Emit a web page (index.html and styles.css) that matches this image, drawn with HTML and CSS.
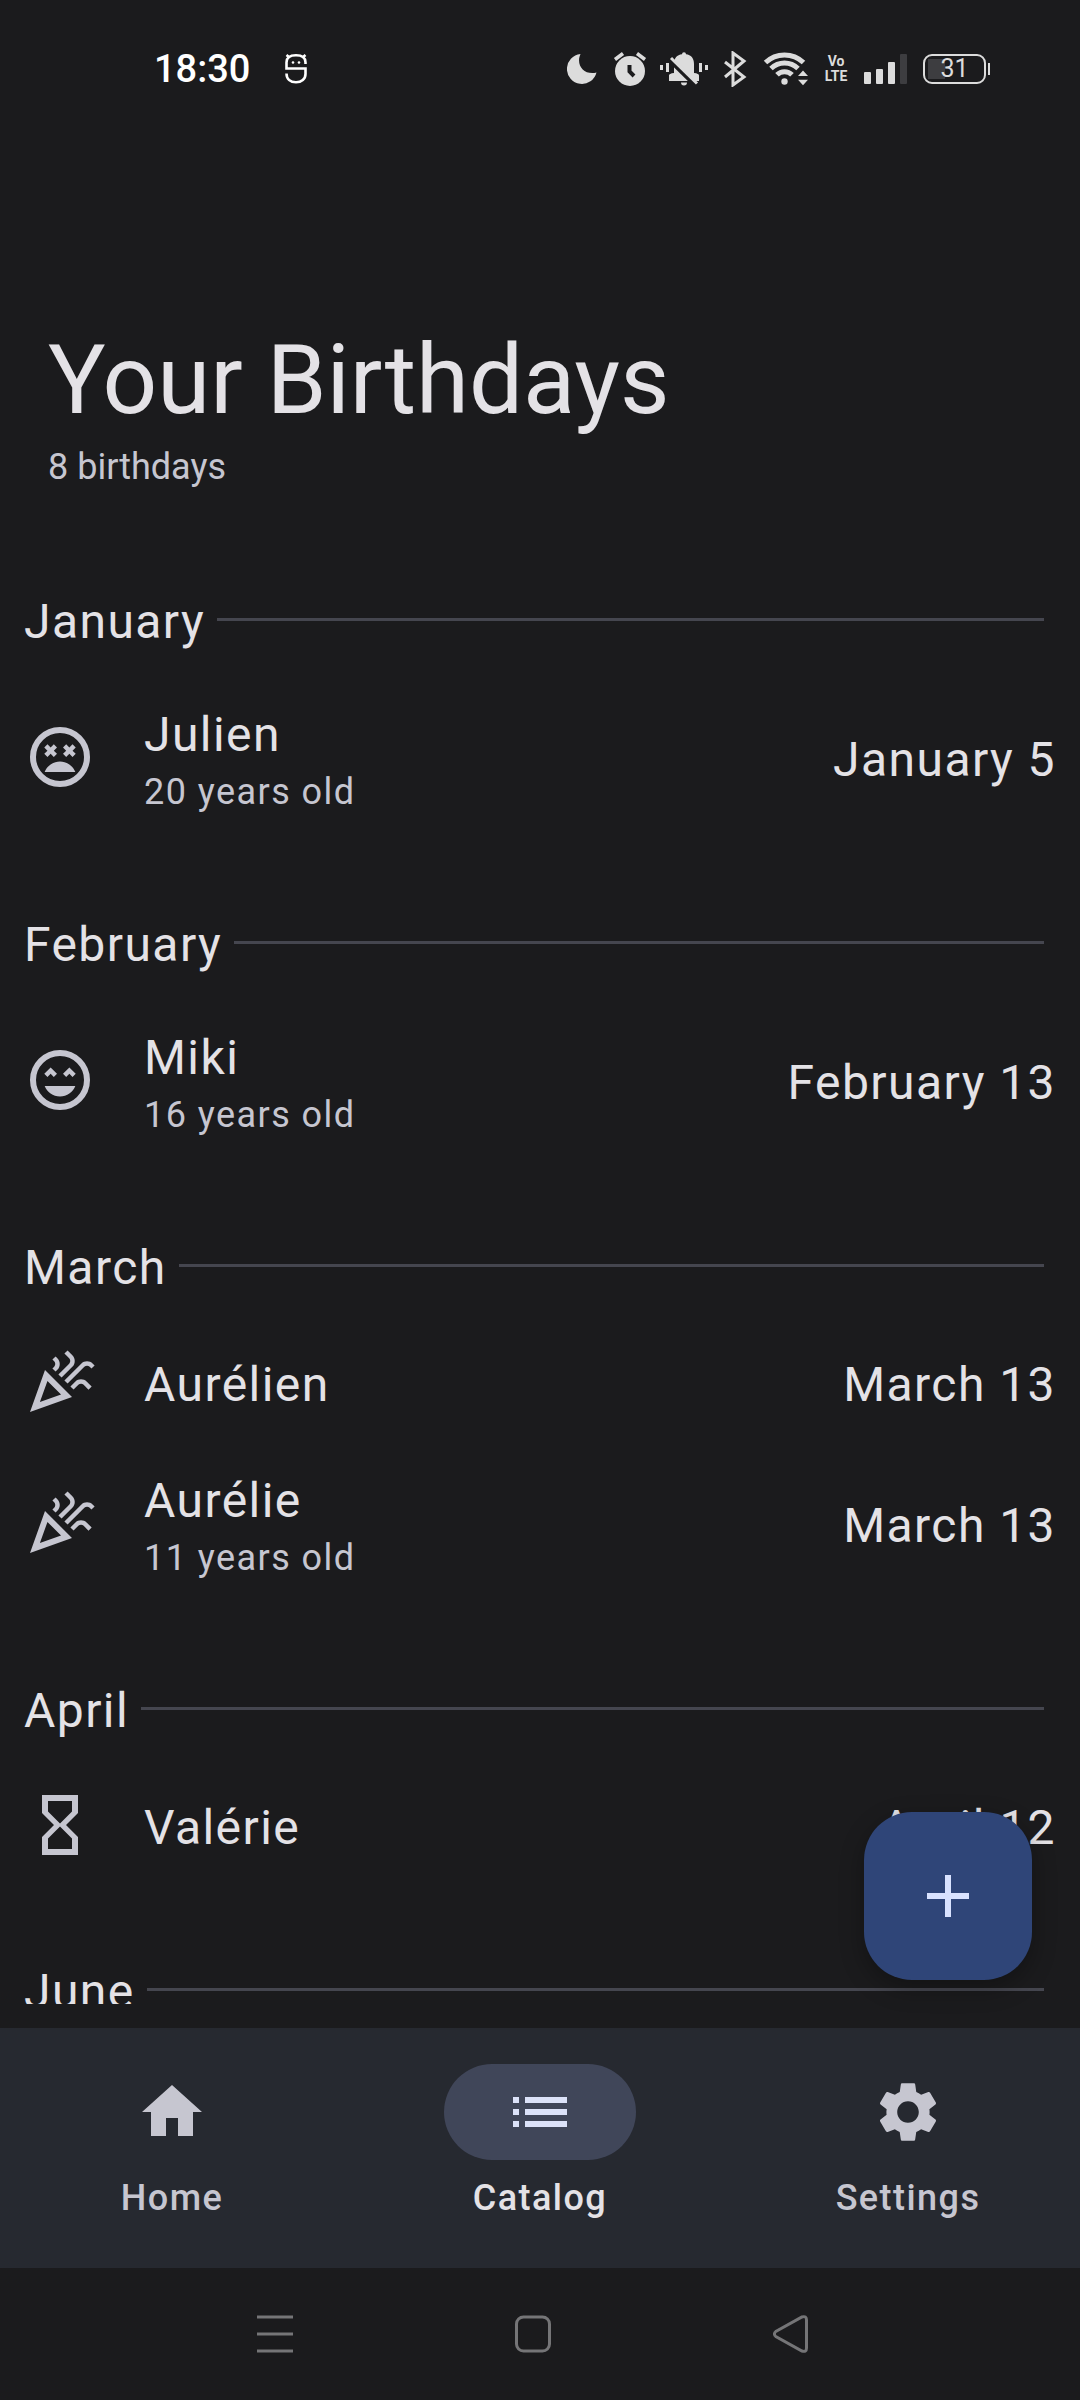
FILE: index.html
```html
<!DOCTYPE html>
<html lang="en">
<head>
<meta charset="utf-8">
<meta name="viewport" content="width=device-width, initial-scale=1">
<title>Your Birthdays</title>
<link rel="stylesheet" href="styles.css">
</head>
<body>
<svg class="sprite" aria-hidden="true">
  <symbol id="icon-dead" viewBox="0 0 24 24">
    <circle cx="12" cy="12" r="9" fill="none" stroke="currentColor" stroke-width="2"/>
    <path d="M12 13.5c-2.33 0-4.31 1.46-5.11 3.5h10.22c-.8-2.04-2.78-3.5-5.11-3.5zM7.82 12l1.06-1.06L9.94 12 11 10.94 9.94 9.88 11 8.82 9.94 7.76 8.88 8.82 7.82 7.76 6.76 8.82l1.06 1.06-1.06 1.06zM17.24 10.94l-1.06-1.06 1.06-1.06-1.06-1.06-1.06 1.06-1.06-1.06L13 8.82l1.06 1.06L13 10.94 14.06 12l1.06-1.06L16.18 12z"/>
  </symbol>
  <symbol id="icon-happy" viewBox="0 0 24 24">
    <circle cx="12" cy="12" r="9" fill="none" stroke="currentColor" stroke-width="2"/>
    <path d="M12 17.5c2.33 0 4.31-1.46 5.11-3.5H6.89c.8 2.04 2.78 3.5 5.11 3.5zM13 9.94L14.06 11l1.06-1.06L16.18 11l1.06-1.06-2.12-2.12zM8.88 9.94L9.94 11 11 9.94 8.88 7.82 6.76 9.94 7.82 11z"/>
  </symbol>
  <symbol id="icon-party" viewBox="0 0 24 24">
    <path d="M2 22l14-5-9-9L2 22zm10.35-5.82L5.3 18.7l2.52-7.05 4.53 4.53zM14.53 12.53l5.59-5.59c.49-.49 1.28-.49 1.77 0l.59.59 1.06-1.06-.59-.59c-1.07-1.07-2.82-1.07-3.89 0l-5.59 5.59 1.06 1.06zM10.06 6.88l-.59.59 1.06 1.06.59-.59c1.07-1.07 1.07-2.82 0-3.89l-.59-.59-1.06 1.07.59.59c.48.48.48 1.28 0 1.76zM17.06 11.88l-1.59 1.59 1.06 1.06 1.59-1.59c.49-.49 1.28-.49 1.77 0l1.61 1.61 1.06-1.06-1.61-1.61c-1.08-1.07-2.82-1.07-3.89 0zM15.06 5.88l-3.59 3.59 1.06 1.06 3.59-3.59c1.07-1.07 1.07-2.82 0-3.89l-1.59-1.59-1.06 1.06 1.59 1.59c.48.49.48 1.29 0 1.77z"/>
  </symbol>
  <symbol id="icon-hourglass" viewBox="0 0 24 24">
    <path d="M6 2v6h.01L6 8.01 10 12l-4 4 .01.01H6V22h12v-5.99h-.01L18 16l-4-4 4-3.99-.01-.01H18V2H6zm10 14.5V20H8v-3.5l4-4 4 4zm-4-5l-4-4V4h8v3.5l-4 4z"/>
  </symbol>
</svg>

<div class="app">
  <header class="status-bar">
    <time class="clock">18:30</time>
    <svg class="status-icon app-badge" width="24" height="36" viewBox="283 51 24 36">
      <g fill="none" stroke="currentColor" stroke-width="2.6">
        <path d="M304.500 64v-1.500c0-4.500-3.500-7.200-9.500-7.200s-9.500 2.700-9.500 7.200v6h19v5.500c0 5-4 8.200-9.500 8.200s-9.500-3.200-9.500-8.700"/>
        <path d="M285.500 55l3 2.500M304.500 55l-3 2.500"/>
      </g>
      <circle cx="292" cy="62.500" r="1.300"/><circle cx="298" cy="62.500" r="1.300"/>
    </svg>
    <div class="status-tray">
      <svg class="status-icon" width="33" height="36" viewBox="567 51 33 36">
        <path d="M580.500 54A15 15 0 1 0 596.500 72.500C584 75.500 575.500 65 580.500 54z"/>
      </svg>
      <svg class="status-icon" width="36" height="36" viewBox="612 51 36 36">
        <circle cx="630" cy="71" r="15"/>
        <path d="M615 59.500l8-6M645 59.500l-8-6" stroke="currentColor" stroke-width="3.500"/>
        <path class="cutout" d="M629.500 65v6.500l4.500 4.500" stroke-width="4"/>
      </svg>
      <svg class="status-icon" width="48" height="36" viewBox="660 51 48 36">
        <path d="M669 81v-5.500q0-2 5-2.500v-9c0-6 3-9 8-9.700a2 2 0 0 1 4 0c5 .7 8 3.700 8 9.700v9q5 .5 5 2.500V81zM681 82.500h6a3 3 0 0 1-6 0zM660 65h3v5h-3zM666 63h3v9h-3zM699 63h3v9h-3zM705 65h3v5h-3z"/>
        <path class="cutout" d="M669 59l28.500 28" stroke-width="5"/>
        <path d="M671 58l26 25.500" stroke="currentColor" stroke-width="3"/>
      </svg>
      <svg class="status-icon" width="28" height="36" viewBox="720 51 28 36">
        <path d="M725 62l19 15-11 8V53l11 8-19 16" fill="none" stroke="currentColor" stroke-width="3"/>
      </svg>
      <svg class="status-icon" width="52" height="36" viewBox="760 51 52 36">
        <g fill="none" stroke="currentColor" stroke-width="5">
          <path d="M765.500 62.500a27.500 27.500 0 0 1 38 0M771 68.500a19.500 19.500 0 0 1 27 0M777 74.800a10.500 10.500 0 0 1 15 0"/>
        </g>
        <circle cx="784.500" cy="81.500" r="3.200"/>
        <path d="M798 76l5-5.500 5 5.500zM798 79.700h10l-5 5.500z"/>
      </svg>
      <span class="volte"><span>Vo</span><span>LTE</span></span>
      <svg class="status-icon" width="51" height="36" viewBox="860 51 51 36">
        <rect x="864" y="72" width="7" height="12" rx="1"/>
        <rect x="876" y="69" width="7" height="15" rx="1"/>
        <rect x="888" y="62" width="7" height="22" rx="1"/>
        <rect class="bar-off" x="900" y="54" width="7" height="30" rx="1"/>
      </svg>
      <span class="battery">31</span>
    </div>
  </header>

  <main class="catalog">
    <div class="page-title">
      <h1>Your Birthdays</h1>
      <p>8 birthdays</p>
    </div>

    <div class="months">
      <section class="month">
        <h2>January</h2>
        <ul>
          <li class="person detailed">
            <svg class="icon"><use href="#icon-dead"/></svg>
            <div class="who"><span class="name">Julien</span><span class="age">20 years old</span></div>
            <time class="date">January 5</time>
          </li>
        </ul>
      </section>
      <section class="month">
        <h2>February</h2>
        <ul>
          <li class="person detailed">
            <svg class="icon"><use href="#icon-happy"/></svg>
            <div class="who"><span class="name">Miki</span><span class="age">16 years old</span></div>
            <time class="date">February 13</time>
          </li>
        </ul>
      </section>
      <section class="month">
        <h2>March</h2>
        <ul>
          <li class="person">
            <svg class="icon"><use href="#icon-party"/></svg>
            <div class="who"><span class="name">Aurélien</span></div>
            <time class="date">March 13</time>
          </li>
          <li class="person detailed">
            <svg class="icon"><use href="#icon-party"/></svg>
            <div class="who"><span class="name">Aurélie</span><span class="age">11 years old</span></div>
            <time class="date">March 13</time>
          </li>
        </ul>
      </section>
      <section class="month">
        <h2>April</h2>
        <ul>
          <li class="person">
            <svg class="icon"><use href="#icon-hourglass"/></svg>
            <div class="who"><span class="name">Valérie</span></div>
            <time class="date">April 12</time>
          </li>
        </ul>
      </section>
      <section class="month">
        <h2>June</h2>
      </section>
    </div>

    <button class="fab" type="button" aria-label="Add birthday">
      <svg class="icon" viewBox="0 0 24 24"><path d="M19 13h-6v6h-2v-6H5v-2h6V5h2v6h6z"/></svg>
    </button>
  </main>

  <nav class="tabs">
    <a class="tab" href="#home">
      <span class="pill"><svg class="icon" viewBox="0 0 24 24"><path d="M10 20v-6h4v6h5v-8h3L12 3 2 12h3v8z"/></svg></span>
      Home
    </a>
    <a class="tab active" href="#catalog" aria-current="page">
      <span class="pill"><svg class="icon" viewBox="0 0 24 24"><path d="M3 13h2v-2H3v2zm0 4h2v-2H3v2zm0-8h2V7H3v2zm4 4h14v-2H7v2zm0 4h14v-2H7v2zM7 7v2h14V7H7z"/></svg></span>
      Catalog
    </a>
    <a class="tab" href="#settings">
      <span class="pill"><svg class="icon" viewBox="0 0 24 24"><path d="M19.14,12.94c0.04-0.3,0.06-0.61,0.06-0.94c0-0.32-0.02-0.64-0.07-0.94l2.03-1.58c0.18-0.14,0.23-0.41,0.12-0.61l-1.92-3.32c-0.12-0.22-0.37-0.29-0.59-0.22l-2.39,0.96c-0.5-0.38-1.03-0.7-1.62-0.94L14.4,2.81c-0.04-0.24-0.24-0.41-0.48-0.41h-3.84c-0.24,0-0.43,0.17-0.47,0.41L9.25,5.35C8.66,5.59,8.12,5.92,7.63,6.29L5.24,5.33c-0.22-0.08-0.47,0-0.59,0.22L2.74,8.87C2.62,9.08,2.66,9.34,2.86,9.48l2.03,1.58C4.84,11.36,4.8,11.69,4.8,12s0.02,0.64,0.07,0.94l-2.03,1.58c-0.18,0.14-0.23,0.41-0.12,0.61l1.92,3.32c0.12,0.22,0.37,0.29,0.59,0.22l2.39-0.96c0.5,0.38,1.03,0.7,1.62,0.94l0.36,2.54c0.05,0.24,0.24,0.41,0.48,0.41h3.84c0.24,0,0.44-0.17,0.47-0.41l0.36-2.54c0.59-0.24,1.13-0.56,1.62-0.94l2.39,0.96c0.22,0.08,0.47,0,0.59-0.22l1.92-3.32c0.12-0.22,0.07-0.47-0.12-0.61L19.14,12.94z M12,15.6c-1.98,0-3.6-1.62-3.6-3.6s1.62-3.6,3.6-3.6s3.6,1.62,3.6,3.6S13.98,15.6,12,15.6z"/></svg></span>
      Settings
    </a>
  </nav>

  <div class="system-nav">
    <button type="button" aria-label="Recent apps"><svg width="36" height="38" viewBox="0 0 36 38"><path d="M0 2h36M0 19h36M0 36h36"/></svg></button>
    <button type="button" aria-label="Home screen"><svg width="36" height="38" viewBox="0 0 36 38"><rect x="1.500" y="2" width="33" height="34" rx="7"/></svg></button>
    <button type="button" aria-label="Back"><svg width="36" height="38" viewBox="0 0 36 38"><path d="M2.800 16.500Q0 19 2.800 21.500L29 36Q33.500 37.500 33.500 33V5Q33.500 .5 29 2z"/></svg></button>
  </div>
</div>
</body>
</html>
```

FILE: styles.css
```css
:root {
  --surface: #1b1b1d;
  --surface-nav: #262930;
  --text: #e4e2e6;
  --text-muted: #c6c6d0;
  --outline: #45464f;
  --status: #dcdcdc;
}

* {
  box-sizing: border-box;
}

body,
h1,
h2,
p,
ul {
  margin: 0;
  padding: 0;
}

body {
  background: var(--surface);
  color: var(--text);
  font-family: Roboto, sans-serif;
}

button {
  border: 0;
  padding: 0;
  background: none;
  color: inherit;
}

svg {
  display: block;
  fill: currentColor;
}

.sprite {
  position: absolute;
  width: 0;
  height: 0;
}

.icon {
  width: 72px;
  height: 72px;
  flex: none;
}

.app {
  display: flex;
  flex-direction: column;
  height: 100vh;
}

/* Status bar */
.status-bar {
  display: flex;
  align-items: center;
  height: 138px;
  padding: 0 90px 0 154px;
  color: var(--status);
}

.clock {
  color: #fff;
  font-size: 38px;
  font-weight: 500;
}

.app-badge {
  margin-left: 34px;
  color: #fff;
}

.status-tray {
  display: flex;
  align-items: center;
  gap: 12px;
  margin-left: auto;
}

.cutout {
  fill: none;
  stroke: var(--surface);
}

.bar-off {
  fill: #3d3d40;
}

.volte {
  display: flex;
  flex-direction: column;
  align-items: center;
  width: 24px;
  font-size: 14px;
  font-weight: 700;
  line-height: 15px;
}

.battery {
  position: relative;
  width: 63px;
  height: 30px;
  margin-right: 4px;
  border: 2px solid var(--status);
  border-radius: 9px;
  background: linear-gradient(#3d3d40, #3d3d40) 3px 3px / 17px 20px no-repeat;
  font-size: 25px;
  line-height: 26px;
  text-align: center;
}

.battery::after {
  content: "";
  position: absolute;
  top: 7px;
  right: -6px;
  width: 2px;
  height: 12px;
  background: var(--status);
}

/* Catalog */
.catalog {
  position: relative;
  display: flex;
  flex: 1;
  flex-direction: column;
  min-height: 0;
  padding-bottom: 24px;
}

.page-title {
  padding: 184px 48px 95px;
}

.page-title h1 {
  font-size: 96px;
  font-weight: 400;
  line-height: 116px;
}

.page-title p {
  margin-top: 5px;
  color: var(--text-muted);
  font-size: 36px;
  line-height: 48px;
}

.months {
  flex: 1;
  min-height: 0;
  overflow-y: auto;
  scrollbar-width: none;
}

.month {
  padding: 0 24px 68px;
}

.month h2 {
  display: flex;
  align-items: center;
  gap: 12px;
  margin: 0 12px 21px 0;
  font-size: 48px;
  font-weight: 400;
  line-height: 72px;
  letter-spacing: 0.03em;
}

.month h2::after {
  content: "";
  flex: 1;
  height: 3px;
  margin-bottom: 6px;
  background: var(--outline);
}

.person {
  display: flex;
  align-items: center;
  gap: 48px;
  min-height: 120px;
  font-size: 48px;
  line-height: 64px;
  letter-spacing: 0.03em;
}

.person.detailed {
  min-height: 162px;
}

.person .icon {
  margin-bottom: 6px;
  color: var(--text-muted);
}

.who {
  display: flex;
  flex: 1;
  flex-direction: column;
}

.age {
  color: var(--text-muted);
  font-size: 36px;
  line-height: 50px;
  letter-spacing: 0.04em;
}

.fab {
  position: absolute;
  right: 48px;
  bottom: 48px;
  display: grid;
  place-items: center;
  width: 168px;
  height: 168px;
  border-radius: 48px;
  background: #2f4578;
  color: #d9e2ff;
  box-shadow: 0 8px 24px rgba(0, 0, 0, 0.3);
}

/* Bottom tabs */
.tabs {
  display: grid;
  grid-template-columns: repeat(3, 1fr);
  gap: 24px;
  padding: 36px 0 46px;
  background: var(--surface-nav);
}

.tab {
  display: flex;
  flex-direction: column;
  align-items: center;
  gap: 14px;
  color: var(--text-muted);
  font-size: 36px;
  font-weight: 500;
  line-height: 48px;
  letter-spacing: 0.04em;
  text-decoration: none;
}

.pill {
  display: grid;
  place-items: center;
  width: 192px;
  height: 96px;
  border-radius: 48px;
}

.tab.active {
  color: var(--text);
}

.active .pill {
  background: #404659;
  color: #dce2f9;
}

/* System navigation */
.system-nav {
  display: flex;
  align-items: center;
  justify-content: space-between;
  height: 132px;
  padding: 0 271px 0 257px;
}

.system-nav svg {
  fill: none;
  stroke: #757577;
  stroke-width: 3;
}
```
